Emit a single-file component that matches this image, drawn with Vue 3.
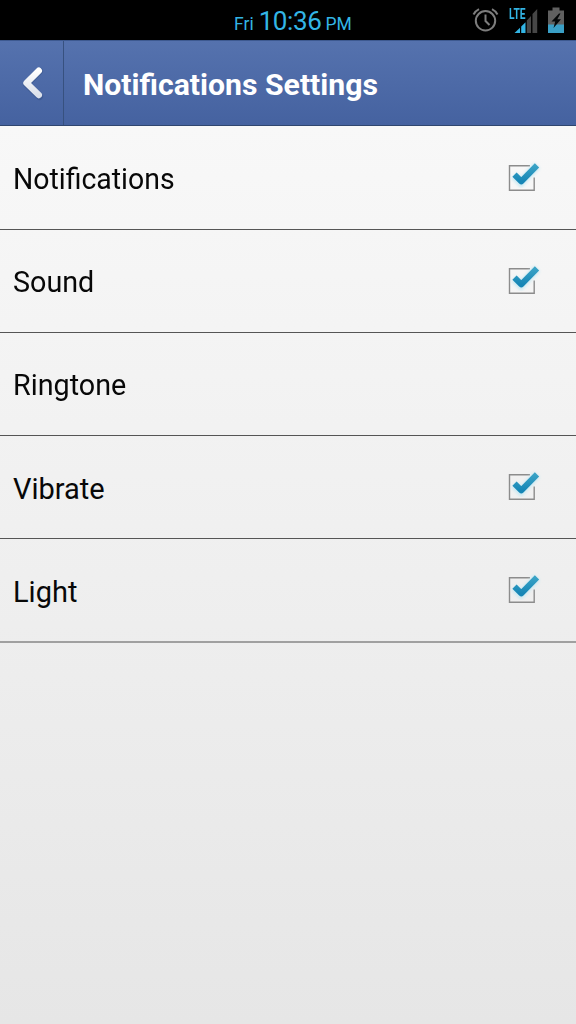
<script setup>
const settings = [
  { label: 'Notifications', checked: true },
  { label: 'Sound', checked: true },
  { label: 'Ringtone', checked: false },
  { label: 'Vibrate', checked: true },
  { label: 'Light', checked: true },
]
</script>

<template>
  <div class="screen">
    <div class="status">
      <div class="clock">
        <span class="small">Fri</span><span class="time">10:36</span><span class="small">PM</span>
      </div>
      <div class="indicators">
        <svg class="alarm" width="28" height="28" viewBox="0 0 28 28" fill="none" stroke="#7d7d7d" stroke-width="2">
          <circle cx="13.500" cy="14.8" r="9.7" />
          <path d="M13.500 8.500V15l4 4M1.500 8.400Q3.500 5 7 3.200M20 3.200Q23.500 5 25.500 8.400" />
        </svg>
        <div class="signal">
          <span class="lte">LTE</span>
          <svg width="30" height="26" viewBox="0 0 30 26">
            <path d="M5.500 26L11 20.800V26Z" fill="#33b5e5" />
            <path d="M12.200 19.500L16.500 15.300V26H12.200Z" fill="#33b5e5" />
            <path d="M17.800 13.400L22 9V26H17.800ZM23.500 7L28.200 2V26H23.500Z" fill="#464646" />
          </svg>
        </div>
        <svg class="battery" width="16" height="26" viewBox="0 0 16 26">
          <path d="M4.500 .5H11.500V3.500H16V18H0V3.500H4.500Z" fill="#606060" />
          <path d="M0 17.500H16V26H0Z" fill="#3a9fc6" />
          <path d="M11 6.500L3.500 14.500H7.200L5.500 21L13 12.300H9.300L12.500 6.500Z" fill="#050708" />
        </svg>
      </div>
    </div>
    <header class="header">
      <button class="back" aria-label="Back">
        <svg width="63" height="85" viewBox="0 0 63 85">
          <defs>
            <linearGradient id="arrow" x1="0" y1="0" x2="0" y2="1">
              <stop offset="0" stop-color="#fff" />
              <stop offset="1" stop-color="#dce1ea" />
            </linearGradient>
          </defs>
          <path d="M39.500 31L26.500 44L39.500 56.500" fill="none" stroke="#344f83" stroke-opacity=".5" stroke-width="7" stroke-linecap="round" stroke-linejoin="round" />
          <path d="M38.800 30.700L26.500 43L38.800 55" fill="none" stroke="url(#arrow)" stroke-width="6.400" stroke-linecap="round" stroke-linejoin="round" />
        </svg>
      </button>
      <h1>Notifications Settings</h1>
    </header>
    <main>
      <div v-for="item in settings" :key="item.label" class="row">
        <span class="label">{{ item.label }}</span>
        <svg v-if="item.checked" class="check" width="38" height="38" viewBox="0 0 38 38">
          <defs>
            <linearGradient id="tick" x1="0" y1="0" x2="0" y2="1">
              <stop offset="0" stop-color="#3aa3c6" />
              <stop offset="1" stop-color="#1686b6" />
            </linearGradient>
            <filter id="glow" x="-30%" y="-30%" width="160%" height="160%">
              <feGaussianBlur stdDeviation="1.500" />
            </filter>
          </defs>
          <path d="M26 8.700H5.500V33.300H30.200V20.500" fill="none" stroke="#8c8c8c" stroke-width="1.400" />
          <path d="M10 18.500L17 25.300L33 8.500" fill="none" stroke="#c6e8f2" stroke-width="8" filter="url(#glow)" />
          <path d="M10.500 17.700L17.300 24.400L33 8.300" fill="none" stroke="url(#tick)" stroke-width="6" stroke-linejoin="round" />
        </svg>
      </div>
    </main>
  </div>
</template>

<style>
body {
  margin: 0;
}
</style>

<style scoped>
.screen {
  height: 1024px;
  display: flex;
  flex-direction: column;
  overflow: hidden;
  font-family: Roboto, "Liberation Sans", sans-serif;
}
.status {
  height: 40px;
  flex: none;
  display: grid;
  grid-template-columns: 1fr auto;
  background: #000;
  color: #33b5e5;
}
.clock {
  display: flex;
  align-items: baseline;
  gap: 5px;
  padding-left: 234px;
  line-height: 42px;
}
.small {
  font-size: 17.5px;
}
.time {
  font-size: 26px;
  letter-spacing: -0.4px;
  margin-right: -1px;
}
.indicators {
  display: flex;
  padding: 6px 12px 0 0;
}
.alarm {
  margin-right: 9px;
}
.signal {
  position: relative;
  width: 30px;
  margin-right: 9px;
}
.signal svg {
  display: block;
  margin-top: 1px;
}
.lte {
  position: absolute;
  left: 0;
  top: 0;
  font-size: 14px;
  line-height: 16px;
  font-weight: 700;
  transform: scaleX(0.73);
  transform-origin: left;
}
.battery {
  margin-top: 1px;
}
.header {
  height: 86px;
  flex: none;
  box-sizing: border-box;
  display: flex;
  border-top: 1px solid #3d5990;
  border-bottom: 1px solid #2f466f;
  background: linear-gradient(#5572ae, #4562a0);
}
.back {
  width: 64px;
  padding: 0;
  border: 0;
  border-right: 1px solid #37517f;
  background: none;
}
.back svg {
  display: block;
  margin-top: -1px;
}
h1 {
  margin: 0 0 0 19px;
  color: #fff;
  font-size: 30.2px;
  font-weight: 700;
  line-height: 88px;
  white-space: nowrap;
}
main {
  flex: 1;
  background: linear-gradient(#f8f8f8, #e6e6e6);
}
.row {
  height: 103px;
  box-sizing: border-box;
  display: flex;
  justify-content: space-between;
  padding: 0 34px 0 13px;
  border-bottom: 1px solid #555;
}
.row:first-child {
  height: 104px;
  padding-top: 1px;
}
.row:last-child {
  height: 104px;
  border-bottom: 2px solid #a0a0a0;
}
.label {
  font-size: 29px;
  line-height: 104px;
  color: #080808;
  transform: scaleX(0.99);
  transform-origin: left;
}
.row:first-child .label {
  transform: scaleX(0.98);
}
.row:nth-child(n + 4) .label {
  line-height: 106px;
  transform: none;
}
.check {
  margin-top: 30px;
}
</style>
